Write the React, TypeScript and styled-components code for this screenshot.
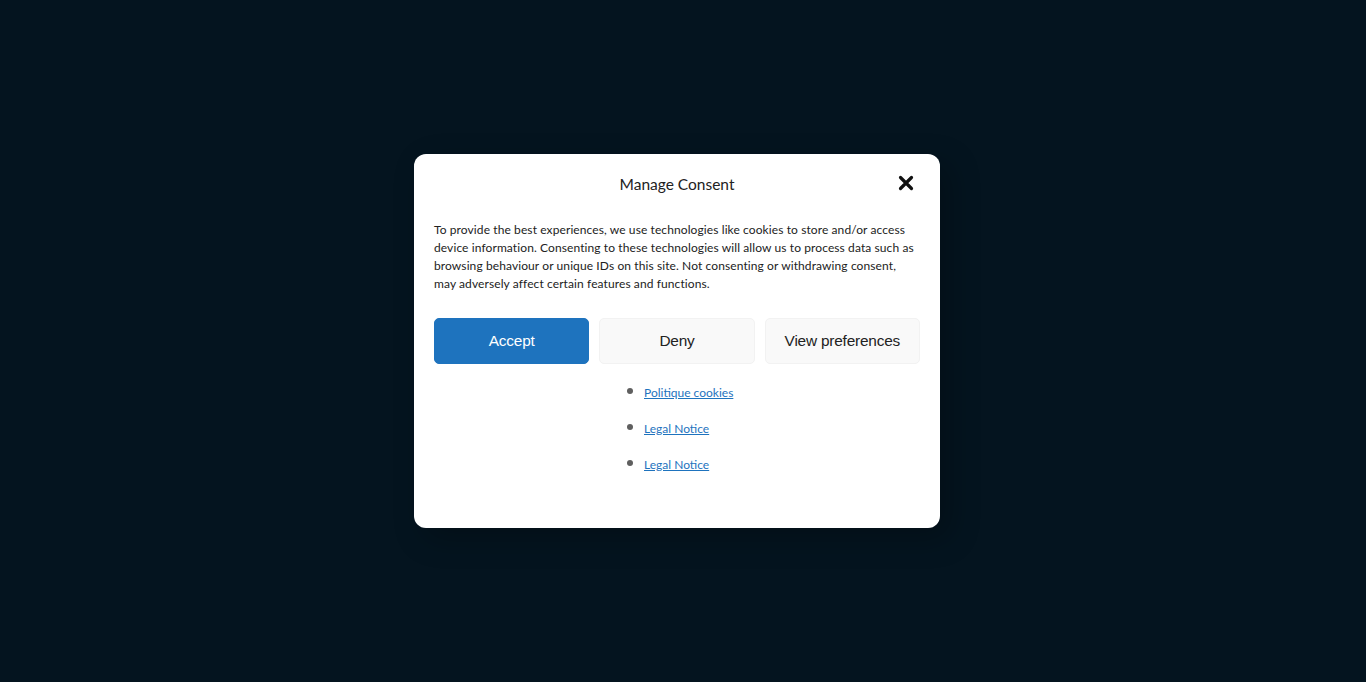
import styled, { createGlobalStyle } from "styled-components";

const GlobalStyle = createGlobalStyle`
  html, body {
    margin: 0;
    padding: 0;
    background: #04141f;
  }
  body {
    font-family: "Lato", "Noto Sans", sans-serif;
  }
`;

const Backdrop = styled.div`
  width: 100%;
  height: 682px;
  display: flex;
  align-items: center;
  justify-content: center;
  background: #04141f;
`;

const Dialog = styled.div`
  box-sizing: border-box;
  width: 526px;
  height: 374px;
  margin: 0 12px 0 0;
  padding: 20px;
  background: #fff;
  border-radius: 12px;
  box-shadow: 10px 10px 30px rgba(0, 0, 0, 0.25);
  display: flex;
  flex-direction: column;
`;

const Header = styled.div`
  position: relative;
  display: flex;
  justify-content: center;
  align-items: center;
  height: 20px;
`;

const Title = styled.h2`
  margin: 0;
  font-size: 15.5px;
  font-weight: 400;
  color: #222;
`;

const Close = styled.button`
  position: absolute;
  right: 5px;
  top: 0;
  width: 18px;
  height: 18px;
  padding: 0;
  border: 0;
  background: none;
  display: flex;
  align-items: center;
  justify-content: center;
  cursor: pointer;
`;

const Message = styled.p`
  margin: 27px 0 0;
  font-size: 12px;
  letter-spacing: 0.1px;
  line-height: 18px;
  color: #222;
`;

const Buttons = styled.div`
  display: grid;
  grid-template-columns: repeat(3, 1fr);
  gap: 10px;
  margin-top: 25px;
`;

const Btn = styled.button<{ $primary?: boolean }>`
  height: 46px;
  border-radius: 5px;
  font-family: "Liberation Sans", Arial, sans-serif;
  font-size: 15.4px;
  letter-spacing: -0.2px;
  cursor: pointer;
  border: 1px solid ${(p) => (p.$primary ? "#1e73be" : "#f2f2f2")};
  background: ${(p) => (p.$primary ? "#1e73be" : "#f9f9f9")};
  color: ${(p) => (p.$primary ? "#fff" : "#222")};
`;

const Links = styled.ul`
  margin: 19px 0 0;
  padding: 0;
  list-style: none;
  display: flex;
  flex-direction: column;
  align-items: center;
  gap: 18px;
`;

const LinkItem = styled.li`
  display: flex;
  align-items: center;
  gap: 11px;
  width: 100px;
  height: 18px;

  &::before {
    content: "";
    width: 6px;
    height: 6px;
    border-radius: 50%;
    background: #5f5f5f;
    margin-top: -2px;
    flex-shrink: 0;
  }

  a {
    font-size: 12px;
    color: #1e73be;
    text-decoration: underline;
    white-space: nowrap;
  }
`;

const links = ["Politique cookies", "Legal Notice", "Legal Notice"];

export default function App() {
  return (
    <>
      <GlobalStyle />
      <Backdrop>
        <Dialog>
          <Header>
            <Title>Manage Consent</Title>
            <Close aria-label="Close">
              <svg width="16" height="16" viewBox="0 0 16 16">
                <path
                  d="M2.5 2.5 L13.5 13.5 M13.5 2.5 L2.5 13.5"
                  stroke="#111"
                  strokeWidth="3.2"
                  strokeLinecap="round"
                />
              </svg>
            </Close>
          </Header>
          <Message>
            To provide the best experiences, we use technologies like cookies to
            store and/or access device information. Consenting to these
            technologies will allow us to process data such as browsing
            behaviour or unique IDs on this site. Not consenting or withdrawing
            consent, may adversely affect certain features and functions.
          </Message>
          <Buttons>
            <Btn $primary>Accept</Btn>
            <Btn>Deny</Btn>
            <Btn>View preferences</Btn>
          </Buttons>
          <Links>
            {links.map((l, i) => (
              <LinkItem key={i}>
                <a href="#">{l}</a>
              </LinkItem>
            ))}
          </Links>
        </Dialog>
      </Backdrop>
    </>
  );
}
